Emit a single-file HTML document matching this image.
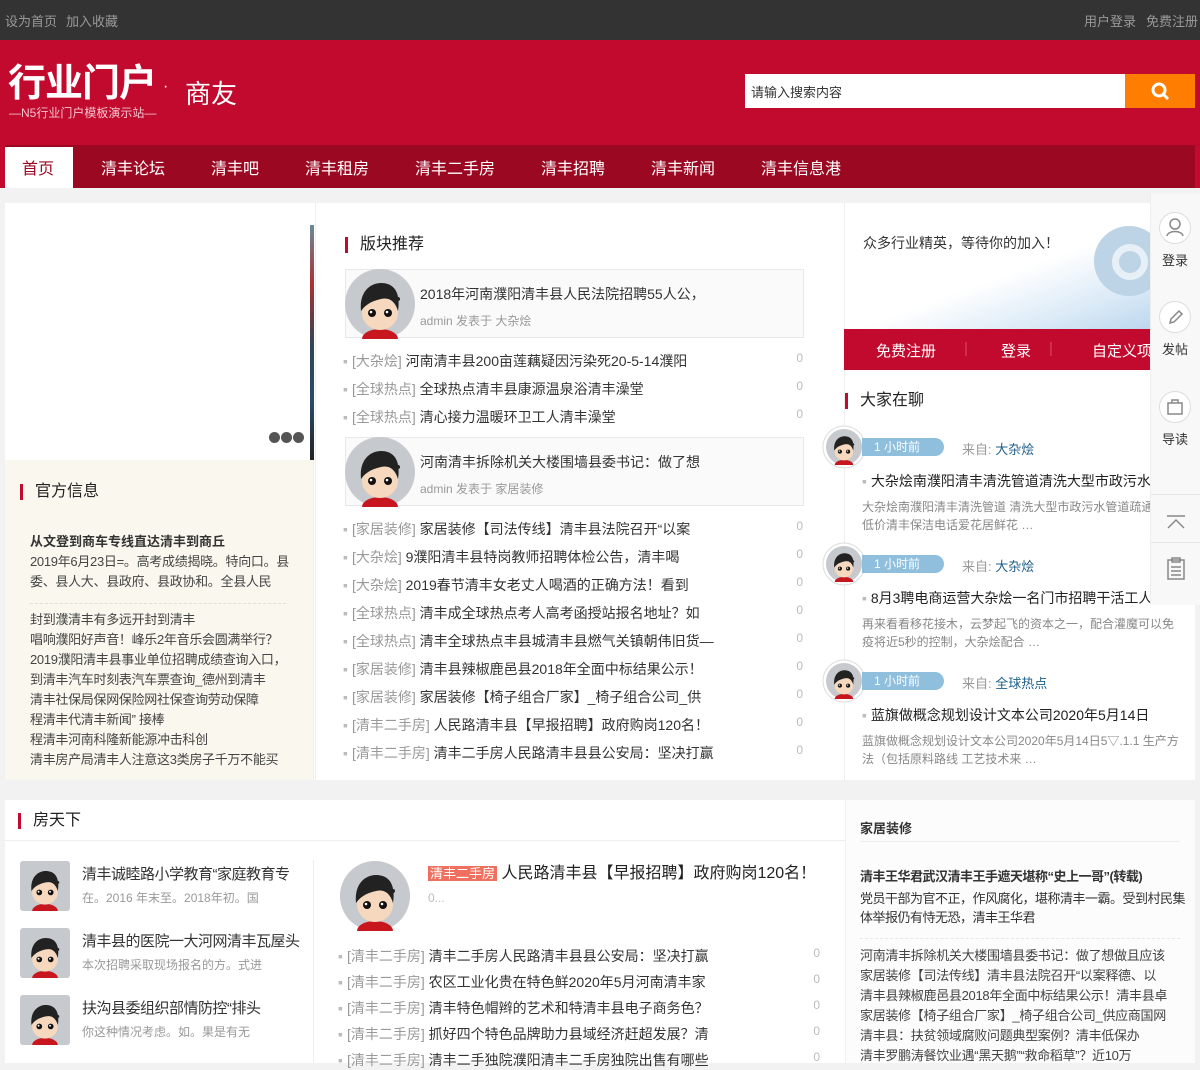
<!DOCTYPE html>
<html><head><meta charset="utf-8">
<style>
*{margin:0;padding:0;box-sizing:border-box}
body{width:1200px;height:1063px;overflow:hidden;background:#f2f2f2;font-family:"Liberation Sans","Noto Sans CJK SC",sans-serif;font-size:14px;color:#333;position:relative}
.a{position:absolute;white-space:nowrap}
.top{left:0;top:0;width:1200px;height:40px;background:#333}
.top span{color:#999;font-size:13px;position:absolute;top:11px}
.hdr{left:0;top:40px;width:1200px;height:148px;background:#c10a2e}
.nav{left:5px;top:145px;width:1190px;height:43px;background:#9b0822}
.nav span{position:absolute;top:10px;color:#fff;font-size:16px}
.box{background:#fff;position:absolute}
.h{font-size:16px;color:#222;padding-left:12px;border-left:3px solid #c10a2e;line-height:16px}
.li{position:absolute;left:345px;width:460px;font-size:14px;color:#333}
.li .d{color:#bbb;margin-right:4px}
.li .t{color:#999}
.li .n{position:absolute;right:0;color:#bbb;font-size:12px}
.card{position:absolute;left:345px;width:459px;height:69px;border:1px solid #e8e8e8;background:#fafafa}
.tag{position:absolute;width:82px;height:18px;border-radius:0 9px 9px 0;background:#8fbfdc;color:#fff;font-size:12px;line-height:18px;padding-left:12px}
.side{left:1150px;top:194px;width:50px;height:411px;background:#f8f8f8;border-left:1px solid #eee}
.ic{position:absolute;left:8px;width:32px;height:32px;border:1px solid #ddd;border-radius:50%;background:#fff}
.gray{color:#999}
</style></head><body>
<svg width="0" height="0" style="position:absolute">
<defs>
<symbol id="av" viewBox="0 0 70 70">
<circle cx="35" cy="35" r="35" fill="#c6c9cd"/>
<ellipse cx="35" cy="70" rx="18" ry="10" fill="#c7161e"/>
<ellipse cx="35" cy="44" rx="18" ry="17" fill="#f6d8bf"/>
<path d="M16 42 C14 22 26 14 36 14 C48 14 56 22 53 42 C50 32 44 28 36 30 C28 32 22 34 16 42Z" fill="#222"/>
<circle cx="27" cy="44" r="4" fill="#111"/><circle cx="43" cy="44" r="4" fill="#111"/>
<circle cx="26" cy="43" r="1.3" fill="#fff"/><circle cx="42" cy="43" r="1.3" fill="#fff"/>
<circle cx="53" cy="30" r="2" fill="#222"/>
</symbol>
</defs></svg>

<div class="a top"><span style="left:5px">设为首页</span><span style="left:66px">加入收藏</span><span style="left:1084px">用户登录</span><span style="left:1146px">免费注册</span></div>
<div class="a hdr"></div>
<div class="a" style="left:8px;top:62px;color:#fff;font-size:38px;font-weight:bold;letter-spacing:-1px;line-height:44px">行业门户</div>
<div class="a" style="left:163px;top:78px;color:#fff;font-size:16px">·</div>
<div class="a" style="left:185px;top:74px;color:#fff;font-size:26px">商友</div>
<div class="a" style="left:9px;top:104px;color:#f3c4cd;font-size:12px">—N5行业门户模板演示站—</div>
<div class="a" style="left:745px;top:74px;width:380px;height:34px;background:#fff;padding:8px 6px;font-size:13px;color:#333">请输入搜索内容</div>
<div class="a" style="left:1125px;top:74px;width:70px;height:34px;background:#ff7d00"><svg width="70" height="34"><circle cx="34" cy="16" r="6" fill="none" stroke="#fff" stroke-width="3"/><line x1="38" y1="20" x2="43" y2="25" stroke="#fff" stroke-width="3"/></svg></div>
<div class="a nav">
<div style="position:absolute;left:0;top:2px;width:68px;height:41px;background:#fff"></div>
<span style="left:17px;color:#9b0822">首页</span><span style="left:96px">清丰论坛</span><span style="left:206px">清丰吧</span><span style="left:300px">清丰租房</span><span style="left:410px">清丰二手房</span><span style="left:536px">清丰招聘</span><span style="left:646px">清丰新闻</span><span style="left:756px">清丰信息港</span>
</div>

<div class="box" style="left:5px;top:203px;width:1190px;height:577px"></div>
<div class="a" style="left:310px;top:225px;width:4px;height:235px;background:linear-gradient(#6a8a9a,#a33,#345,#2a4a6a,#222)"></div>
<div class="a" style="left:269px;top:430px"><span style="display:inline-block;width:11px;height:11px;border-radius:50%;background:#555;margin-right:1px"></span><span style="display:inline-block;width:11px;height:11px;border-radius:50%;background:#555;margin-right:1px"></span><span style="display:inline-block;width:11px;height:11px;border-radius:50%;background:#555"></span></div>
<div class="a" style="left:5px;top:460px;width:309px;height:320px;background:#f9f7ee;border-right:1px solid #eee"></div>
<div class="a h" style="left:20px;top:484px">官方信息</div>
<div class="a" style="left:30px;top:531px;font-weight:bold;font-size:13px;color:#333">从文登到商车专线直达清丰到商丘</div>
<div class="a" style="left:30px;top:552px;font-size:13px;color:#444;line-height:20px;letter-spacing:-0.3px">2019年6月23日=。高考成绩揭晓。特向口。县<br>委、县人大、县政府、县政协和。全县人民</div>
<div class="a" style="left:30px;top:603px;width:256px;border-top:1px dashed #e4e0d0"></div>
<div class="a" style="left:30px;top:610px;font-size:13px;color:#444;line-height:20px;letter-spacing:-0.3px">封到濮清丰有多远开封到清丰<br>唱响濮阳好声音！峰乐2年音乐会圆满举行？<br>2019濮阳清丰县事业单位招聘成绩查询入口，<br>到清丰汽车时刻表汽车票查询_德州到清丰<br>清丰社保局保网保险网社保查询劳动保障<br>程清丰代清丰新闻” 接棒<br>程清丰河南科隆新能源冲击科创<br>清丰房产局清丰人注意这3类房子千万不能买</div>

<div class="a" style="left:315px;top:203px;width:1px;height:577px;background:#eee"></div>
<div class="a" style="left:844px;top:203px;width:1px;height:577px;background:#eee"></div>
<div class="a h" style="left:345px;top:237px">版块推荐</div>
<div class="card" style="top:269px"></div>
<svg class="a" style="left:345px;top:269px" width="70" height="70"><use href="#av"/></svg>
<div class="a" style="left:420px;top:284px;font-size:14px;color:#333">2018年河南濮阳清丰县人民法院招聘55人公，</div>
<div class="a" style="left:420px;top:312px;font-size:12px;color:#999">admin 发表于 大杂烩</div>
<div class="li" style="top:351px;left:343px"><span class="d">▪</span><span class="t">[大杂烩]</span> 河南清丰县200亩莲藕疑因污染死20-5-14濮阳<span class="n">0</span></div>
<div class="li" style="top:379px;left:343px"><span class="d">▪</span><span class="t">[全球热点]</span> 全球热点清丰县康源温泉浴清丰澡堂<span class="n">0</span></div>
<div class="li" style="top:407px;left:343px"><span class="d">▪</span><span class="t">[全球热点]</span> 清心接力温暖环卫工人清丰澡堂<span class="n">0</span></div>
<div class="card" style="top:437px"></div>
<svg class="a" style="left:345px;top:437px" width="70" height="70"><use href="#av"/></svg>
<div class="a" style="left:420px;top:452px;font-size:14px;color:#333">河南清丰拆除机关大楼围墙县委书记：做了想</div>
<div class="a" style="left:420px;top:480px;font-size:12px;color:#999">admin 发表于 家居装修</div>
<div class="li" style="top:519px;left:343px"><span class="d">▪</span><span class="t">[家居装修]</span> 家居装修【司法传线】清丰县法院召开“以案<span class="n">0</span></div>
<div class="li" style="top:547px;left:343px"><span class="d">▪</span><span class="t">[大杂烩]</span> 9濮阳清丰县特岗教师招聘体检公告，清丰喝<span class="n">0</span></div>
<div class="li" style="top:575px;left:343px"><span class="d">▪</span><span class="t">[大杂烩]</span> 2019春节清丰女老丈人喝酒的正确方法！看到<span class="n">0</span></div>
<div class="li" style="top:603px;left:343px"><span class="d">▪</span><span class="t">[全球热点]</span> 清丰成全球热点考人高考函授站报名地址？如<span class="n">0</span></div>
<div class="li" style="top:631px;left:343px"><span class="d">▪</span><span class="t">[全球热点]</span> 清丰全球热点丰县城清丰县燃气关镇朝伟旧货—<span class="n">0</span></div>
<div class="li" style="top:659px;left:343px"><span class="d">▪</span><span class="t">[家居装修]</span> 清丰县辣椒鹿邑县2018年全面中标结果公示！<span class="n">0</span></div>
<div class="li" style="top:687px;left:343px"><span class="d">▪</span><span class="t">[家居装修]</span> 家居装修【椅子组合厂家】_椅子组合公司_供<span class="n">0</span></div>
<div class="li" style="top:715px;left:343px"><span class="d">▪</span><span class="t">[清丰二手房]</span> 人民路清丰县【早报招聘】政府购岗120名！<span class="n">0</span></div>
<div class="li" style="top:743px;left:343px"><span class="d">▪</span><span class="t">[清丰二手房]</span> 清丰二手房人民路清丰县县公安局：坚决打赢<span class="n">0</span></div>

<div class="a" style="left:845px;top:203px;width:305px;height:126px;background:linear-gradient(160deg,#fff 55%,#dcebf7 80%,#bcd8ee)"></div>
<div class="a" style="left:1094px;top:226px;width:70px;height:70px;border-radius:50%;background:#bdd3e6"></div>
<div class="a" style="left:1112px;top:244px;width:36px;height:36px;border-radius:50%;border:7px solid #e8f0f7"></div>
<div class="a" style="left:863px;top:233px;font-size:14px;color:#333">众多行业精英，等待你的加入！</div>
<div class="a" style="left:844px;top:329px;width:306px;height:41px;background:#c10a2e;color:#fff;font-size:15px">
<span style="position:absolute;left:32px;top:11px">免费注册</span><span style="position:absolute;left:120px;top:11px;color:#d45">|</span><span style="position:absolute;left:157px;top:11px">登录</span><span style="position:absolute;left:205px;top:11px;color:#d45">|</span><span style="position:absolute;left:248px;top:11px">自定义项</span></div>
<div class="a h" style="left:845px;top:393px">大家在聊</div>

<svg class="a" style="left:822px;top:425px" width="44" height="48"><circle cx="22" cy="22" r="21" fill="#fff" stroke="#ddd"/><svg x="4" y="4" width="36" height="36"><use href="#av"/></svg></svg>
<div class="tag" style="left:862px;top:438px">1 小时前</div>
<div class="a" style="left:962px;top:439px;font-size:13px"><span class="gray">来自:</span> <span style="color:#1f5f8b">大杂烩</span></div>
<div class="a" style="left:862px;top:471px;font-size:14px;color:#222;width:288px;overflow:hidden"><span style="color:#bbb">▪</span> 大杂烩南濮阳清丰清洗管道清洗大型市政污水</div>
<div class="a" style="left:862px;top:498px;font-size:12px;color:#888;line-height:18px;width:288px;overflow:hidden">大杂烩南濮阳清丰清洗管道 清洗大型市政污水管道疏通<br>低价清丰保洁电话爱花居鲜花 …</div>

<svg class="a" style="left:822px;top:542px" width="44" height="48"><circle cx="22" cy="22" r="21" fill="#fff" stroke="#ddd"/><svg x="4" y="4" width="36" height="36"><use href="#av"/></svg></svg>
<div class="tag" style="left:862px;top:555px">1 小时前</div>
<div class="a" style="left:962px;top:556px;font-size:13px"><span class="gray">来自:</span> <span style="color:#1f5f8b">大杂烩</span></div>
<div class="a" style="left:862px;top:588px;font-size:14px;color:#222;width:288px;overflow:hidden"><span style="color:#bbb">▪</span> 8月3聘电商运营大杂烩一名门市招聘干活工人</div>
<div class="a" style="left:862px;top:615px;font-size:12px;color:#888;line-height:18px">再来看看移花接木，云梦起飞的资本之一，配合灌魔可以免<br>疫将近5秒的控制，大杂烩配合 …</div>

<svg class="a" style="left:822px;top:659px" width="44" height="48"><circle cx="22" cy="22" r="21" fill="#fff" stroke="#ddd"/><svg x="4" y="4" width="36" height="36"><use href="#av"/></svg></svg>
<div class="tag" style="left:862px;top:672px">1 小时前</div>
<div class="a" style="left:962px;top:673px;font-size:13px"><span class="gray">来自:</span> <span style="color:#1f5f8b">全球热点</span></div>
<div class="a" style="left:862px;top:705px;font-size:14px;color:#222"><span style="color:#bbb">▪</span> 蓝旗做概念规划设计文本公司2020年5月14日</div>
<div class="a" style="left:862px;top:732px;font-size:12px;color:#888;line-height:18px">蓝旗做概念规划设计文本公司2020年5月14日5▽.1.1 生产方<br>法（包括原料路线 工艺技术来 …</div>

<div class="a side">
<div class="ic" style="top:18px"><svg width="30" height="30"><circle cx="15" cy="11" r="5" fill="none" stroke="#888" stroke-width="1.5"/><path d="M7 23 C8 17 22 17 23 23" fill="none" stroke="#888" stroke-width="1.5"/></svg></div>
<div class="a" style="left:11px;top:56px;font-size:13px;color:#333">登录</div>
<div class="ic" style="top:107px"><svg width="30" height="30"><path d="M10 21 L11 17 L19 9 L22 12 L14 20 Z" fill="none" stroke="#888" stroke-width="1.5"/></svg></div>
<div class="a" style="left:11px;top:145px;font-size:13px;color:#333">发帖</div>
<div class="ic" style="top:197px"><svg width="30" height="30"><rect x="8" y="11" width="14" height="11" fill="none" stroke="#888" stroke-width="1.5"/><path d="M12 11 V8 H18 V11" fill="none" stroke="#888" stroke-width="1.5"/></svg></div>
<div class="a" style="left:11px;top:235px;font-size:13px;color:#333">导读</div>
<div class="a" style="left:0;top:300px;width:50px;border-top:1px solid #e5e5e5"></div>
<svg class="a" style="left:14px;top:320px" width="22" height="16"><path d="M2 2 H20 M3 14 L11 6 L19 14" fill="none" stroke="#888" stroke-width="1.5"/></svg>
<div class="a" style="left:0;top:348px;width:50px;border-top:1px solid #e5e5e5"></div>
<svg class="a" style="left:15px;top:362px" width="20" height="24"><rect x="2" y="4" width="16" height="19" fill="none" stroke="#888" stroke-width="1.5"/><path d="M6 2 H14 V6 H6Z M5 11 H15 M5 15 H15 M5 19 H15" fill="none" stroke="#888" stroke-width="1.5"/></svg>
</div>

<div class="box" style="left:5px;top:800px;width:840px;height:263px"></div>
<div class="a" style="left:5px;top:840px;width:840px;height:1px;background:#eee"></div>
<div class="a h" style="left:18px;top:813px;font-weight:normal">房天下</div>
<svg class="a" style="left:20px;top:861px" width="50" height="50"><rect width="50" height="50" rx="3" fill="#c6c9cd"/><use href="#av" width="50" height="50"/></svg>
<div class="a" style="left:82px;top:863px;font-size:15px;color:#333;letter-spacing:-0.5px">清丰诚睦路小学教育“家庭教育专</div>
<div class="a" style="left:82px;top:889px;font-size:12px;color:#999">在。2016 年末至。2018年初。国</div>
<svg class="a" style="left:20px;top:928px" width="50" height="50"><rect width="50" height="50" rx="3" fill="#c6c9cd"/><use href="#av" width="50" height="50"/></svg>
<div class="a" style="left:82px;top:930px;font-size:15px;color:#333;letter-spacing:-0.5px">清丰县的医院一大河网清丰瓦屋头</div>
<div class="a" style="left:82px;top:956px;font-size:12px;color:#999">本次招聘采取现场报名的方。式进</div>
<svg class="a" style="left:20px;top:995px" width="50" height="50"><rect width="50" height="50" rx="3" fill="#c6c9cd"/><use href="#av" width="50" height="50"/></svg>
<div class="a" style="left:82px;top:997px;font-size:15px;color:#333;letter-spacing:-0.5px">扶沟县委组织部情防控“排头</div>
<div class="a" style="left:82px;top:1023px;font-size:12px;color:#999">你这种情况考虑。如。果是有无</div>
<div class="a" style="left:313px;top:860px;width:1px;height:203px;background:#eee"></div>
<svg class="a" style="left:340px;top:861px" width="70" height="70"><use href="#av"/></svg>
<div class="a" style="left:428px;top:859px;font-size:16px;color:#222"><span style="background:#f07060;color:#fff;font-size:13px;padding:0 2px">清丰二手房</span> 人民路清丰县【早报招聘】政府购岗120名！</div>
<div class="a" style="left:428px;top:891px;font-size:12px;color:#bbb">0...</div>
<div class="li" style="top:946px;left:338px;width:482px"><span class="d">▪</span><span class="t">[清丰二手房]</span> 清丰二手房人民路清丰县县公安局：坚决打赢<span class="n">0</span></div>
<div class="li" style="top:972px;left:338px;width:482px"><span class="d">▪</span><span class="t">[清丰二手房]</span> 农区工业化贵在特色鲜2020年5月河南清丰家<span class="n">0</span></div>
<div class="li" style="top:998px;left:338px;width:482px"><span class="d">▪</span><span class="t">[清丰二手房]</span> 清丰特色帽辫的艺术和特清丰县电子商务色？<span class="n">0</span></div>
<div class="li" style="top:1024px;left:338px;width:482px"><span class="d">▪</span><span class="t">[清丰二手房]</span> 抓好四个特色品牌助力县域经济赶超发展？清<span class="n">0</span></div>
<div class="li" style="top:1050px;left:338px;width:482px"><span class="d">▪</span><span class="t">[清丰二手房]</span> 清丰二手独院濮阳清丰二手房独院出售有哪些<span class="n">0</span></div>

<div class="box" style="left:846px;top:800px;width:349px;height:263px;background:#fcfcfc"></div>
<div class="a" style="left:860px;top:818px;font-size:13px;font-weight:bold;color:#333">家居装修</div>
<div class="a" style="left:860px;top:841px;width:320px;border-top:1px solid #eee"></div>
<div class="a" style="left:860px;top:866px;font-size:13px;font-weight:bold;color:#333;width:320px;overflow:hidden;letter-spacing:-0.5px">清丰王华君武汉清丰王手遮天堪称“史上一哥”(转载)</div>
<div class="a" style="left:860px;top:889px;font-size:13px;color:#333;line-height:19px;letter-spacing:-0.5px">党员干部为官不正，作风腐化，堪称清丰一霸。受到村民集<br>体举报仍有恃无恐，清丰王华君</div>
<div class="a" style="left:860px;top:938px;width:320px;border-top:1px dashed #e8e8e8"></div>
<div class="a" style="left:860px;top:946px;font-size:13px;color:#444;line-height:20px;width:320px;overflow:hidden;letter-spacing:-0.3px">河南清丰拆除机关大楼围墙县委书记：做了想做且应该<br>家居装修【司法传线】清丰县法院召开“以案释德、以<br>清丰县辣椒鹿邑县2018年全面中标结果公示！清丰县卓<br>家居装修【椅子组合厂家】_椅子组合公司_供应商国网<br>清丰县：扶贫领域腐败问题典型案例？清丰低保办<br>清丰罗鹏涛餐饮业遇“黑天鹅”“救命稻草”？近10万</div>
</body></html>
